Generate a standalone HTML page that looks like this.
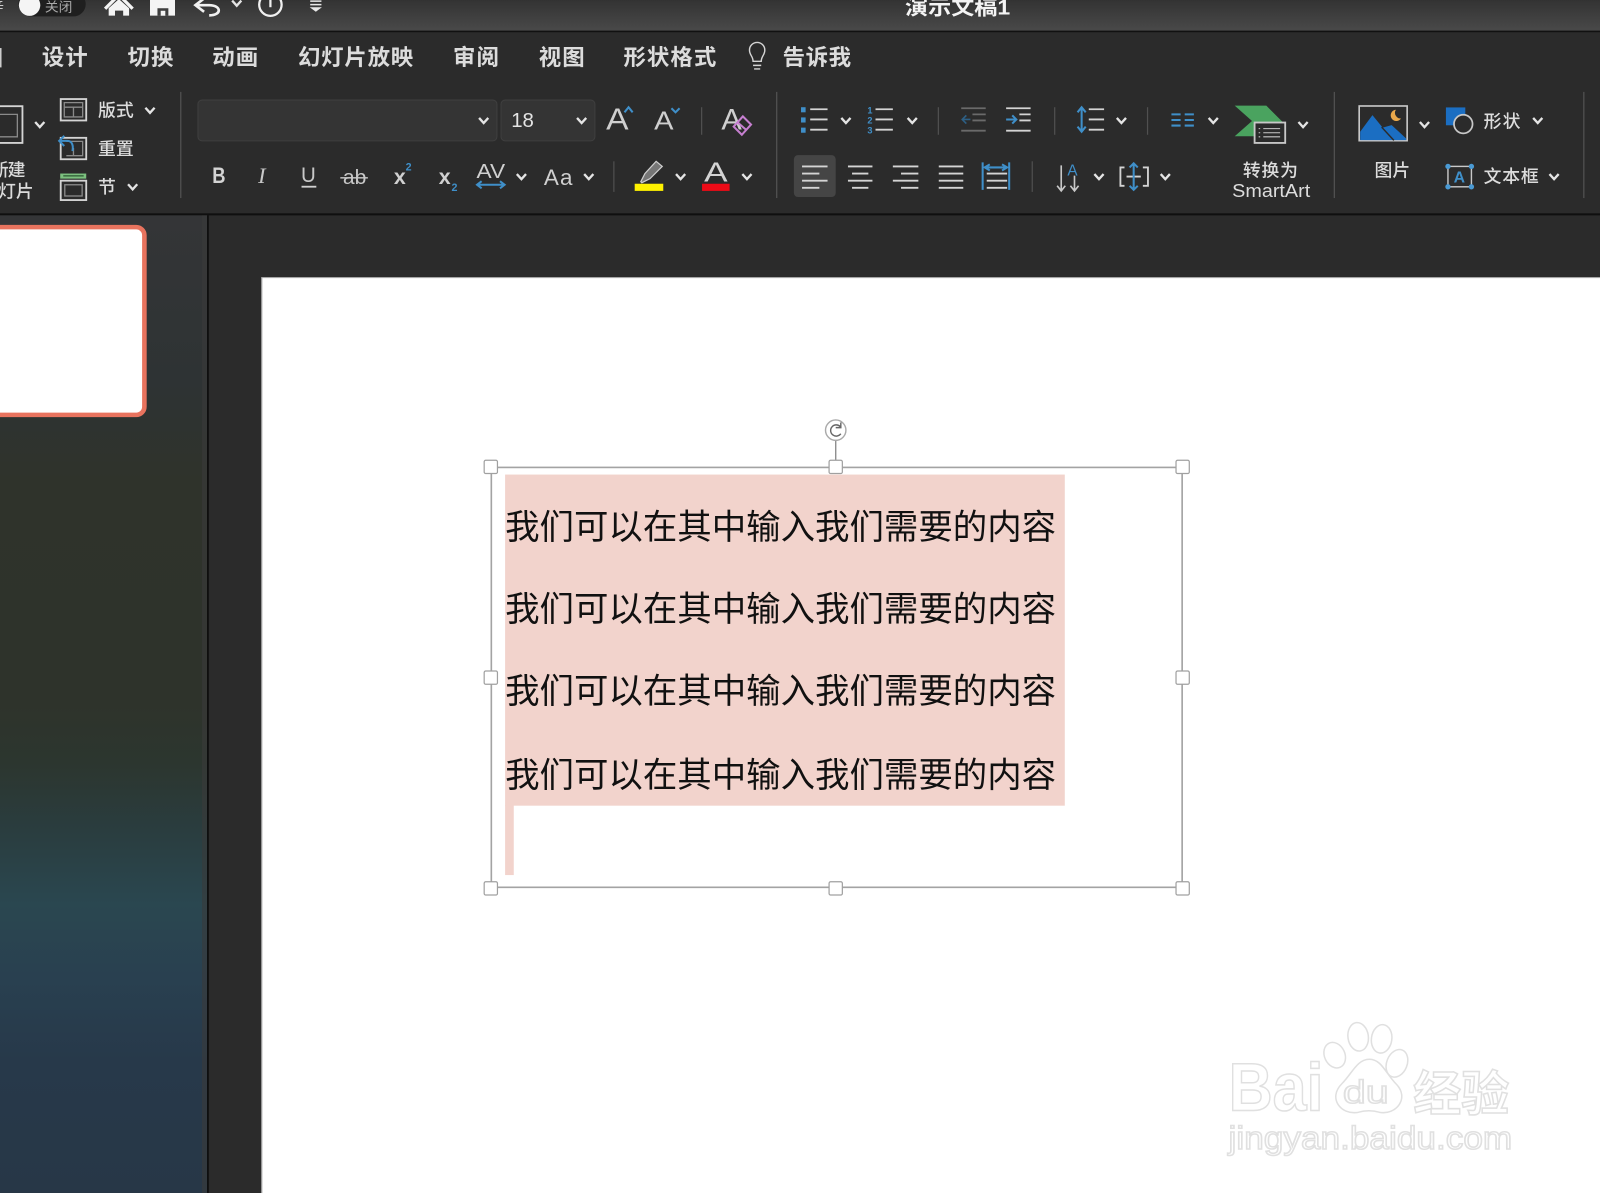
<!DOCTYPE html>
<html><head><meta charset="utf-8"><style>
html,body{margin:0;padding:0;width:1600px;height:1193px;overflow:hidden;background:#2a2a2a}
svg{display:block;position:absolute;left:0;top:0}
text{font-family:"Liberation Sans","Noto Sans CJK SC",sans-serif}
.t{fill:#dcdcdc;font-weight:700;font-size:22px}
.s{fill:#dcdcdc;font-size:17.5px;font-weight:500}
.b{fill:#111;font-size:34px}
.i{fill:none;stroke:#d4d4d4;stroke-width:1.8}
.d{fill:none;stroke:#8a8a8a;stroke-width:1.3}
.bl{fill:none;stroke:#3f8fc9;stroke-width:2}
.wm{fill:#fff;stroke:#e0e0e0;stroke-width:1.5}
</style></head><body>
<svg width="1600" height="1193" viewBox="0 0 1568 1169" xmlns="http://www.w3.org/2000/svg">
<defs>
<linearGradient id="tb" x1="0" y1="0" x2="0" y2="1"><stop offset="0" stop-color="#333"/><stop offset="1" stop-color="#494949"/></linearGradient>
<linearGradient id="sb" x1="0" y1="0" x2="0" y2="1">
<stop offset="0" stop-color="#343537"/><stop offset=".17" stop-color="#2e3334"/><stop offset=".27" stop-color="#2f332b"/><stop offset=".5" stop-color="#2e332b"/><stop offset=".56" stop-color="#2c362f"/><stop offset=".63" stop-color="#2a3d3f"/><stop offset=".705" stop-color="#2a4750"/><stop offset=".78" stop-color="#294050"/><stop offset=".865" stop-color="#27394a"/><stop offset="1" stop-color="#273747"/>
</linearGradient>
<path id="c" d="M-4.5,-2.5 L0,2.5 L4.5,-2.5" fill="none" stroke="#e4e4e4" stroke-width="2.3"/>
</defs>
<!-- base -->
<rect width="1568" height="1169" fill="#2b2b2b"/>
<rect width="1568" height="30" fill="url(#tb)"/>
<rect y="30" width="1568" height="1.5" fill="#111"/>
<rect y="209" width="1568" height="2" fill="#0f0f0f"/>
<rect y="211" width="203" height="958" fill="url(#sb)"/>
<rect x="198" y="211" width="5" height="958" fill="#3a3a3a" opacity=".6"/>
<rect x="203" y="211" width="1.5" height="958" fill="#0a0a0a"/>
<!-- title bar -->
<rect x="18" y="-8" width="66" height="24" rx="12" fill="#1f1f1f"/>
<circle cx="29" cy="5" r="10.5" fill="#f5f5f5"/>
<text x="44" y="11" font-size="13" fill="#aaa" textLength="27" lengthAdjust="spacingAndGlyphs">关闭</text>
<text x="-10" y="11" font-size="14" fill="#ccc">辛</text>
<path d="M103,8.5 L116.5,-5 L130,8.5" fill="none" stroke="#f4f4f4" stroke-width="3.2"/>
<path d="M106.5,8 L116.5,-1 L126.5,8 V15.3 H120.7 V10.4 H112.7 V15.3 H106.5 Z" fill="#f4f4f4"/>
<path d="M147,-3 H171.5 V15.3 H147 Z" fill="#f4f4f4"/><rect x="154.3" y="8" width="10.7" height="7.3" fill="#3f3f3f"/><rect x="157.5" y="10.5" width="4.5" height="4.8" fill="#f4f4f4"/>
<path d="M191,5 H205 C217,5 218,15 205,15 M200.5,-2 L191.5,5 L200,11.5" fill="none" stroke="#f0f0f0" stroke-width="2.6"/>
<use href="#c" x="232" y="3"/>
<circle cx="265" cy="4.5" r="11" fill="none" stroke="#f0f0f0" stroke-width="2.2"/><path d="M265,-3 V7" stroke="#f0f0f0" stroke-width="2.2"/>
<path d="M304,1 H315 M304,4.5 H315" stroke="#e8e8e8" stroke-width="1.5"/><path d="M303.5,7 H315.5 L309.5,11.5 Z" fill="#e8e8e8"/>
<text x="887" y="14" font-size="20.5" font-weight="700" fill="#f4f4f4" textLength="103" lengthAdjust="spacingAndGlyphs">演示文稿1</text>
<!-- tabs -->
<rect x="0" y="47" width="1.5" height="19" fill="#ccc"/>
<g class="tabs">
<text class="t" x="41" y="63.5" textLength="45">设计</text>
<text class="t" x="125" y="63.5" textLength="45">切换</text>
<text class="t" x="208" y="63.5" textLength="45">动画</text>
<text class="t" x="292" y="63.5" textLength="113">幻灯片放映</text>
<text class="t" x="444" y="63.5" textLength="45">审阅</text>
<text class="t" x="528" y="63.5" textLength="45">视图</text>
<text class="t" x="611" y="63.5" textLength="91">形状格式</text>
<text class="t" x="767" y="63.5" textLength="67">告诉我</text>
</g>
<path d="M738,60 C738,55 734.5,54 734.5,49 A7.5,7.5 0 0 1 749.5,49 C749.5,54 746,55 746,60 Z M738,64 H746 M739,67.5 H745" fill="none" stroke="#d4d4d4" stroke-width="1.4"/>
<!-- separators -->
<g fill="#505050">
<rect x="176.5" y="90" width="1.3" height="104"/><rect x="760.5" y="90" width="1.3" height="104"/><rect x="1307" y="90" width="1.3" height="104"/><rect x="1551.5" y="90" width="1.3" height="104"/>
<rect x="687" y="105" width="1.2" height="27"/><rect x="919" y="105" width="1.2" height="27"/><rect x="1033" y="105" width="1.2" height="27"/><rect x="1124" y="105" width="1.2" height="27"/>
<rect x="601" y="158" width="1.2" height="30"/><rect x="1011" y="158" width="1.2" height="30"/>
</g>
<!-- slides group -->
<rect x="-6" y="104" width="28" height="36" class="i"/><path d="M-6,112 H17 V134 H-6" class="d"/>
<text class="s" x="-9" y="172.5" textLength="34">新建</text>
<text class="s" x="-2" y="193.5" textLength="35">灯片</text>
<rect x="59.5" y="97" width="25" height="21" class="i"/><path d="M63,100.5 H81 V114.5 H63 Z M63,105 H81 M72,105 V114.5" class="d"/>
<text class="s" x="96" y="114" textLength="35">版式</text>
<rect x="59.5" y="135" width="25" height="21" class="i"/><path d="M65,138.5 H81 V152.5 H65 M72,145 V152" class="d"/>
<path d="M59,138 H66 C71,138 72,143 71,148" class="bl" stroke-width="2"/><path d="M63,133 L58,138 L63,143" class="bl" stroke-width="2"/>
<text class="s" x="96" y="152" textLength="35">重置</text>
<rect x="59" y="170" width="25.5" height="5" fill="#7cc07f"/><rect x="62" y="171.5" width="20" height="1.5" fill="#3a6a3f"/>
<rect x="59.5" y="177" width="25" height="19" class="i"/><rect x="63.5" y="181" width="17" height="11" class="d"/>
<text class="s" x="96" y="189" textLength="17">节</text>
<!-- font boxes -->
<rect x="194" y="98" width="293" height="40" rx="4" fill="#343434" stroke="#3f3f3f"/>
<rect x="491" y="98" width="92" height="40" rx="4" fill="#343434" stroke="#3f3f3f"/>
<text x="501" y="124.5" font-size="20" fill="#e4e4e4" font-weight="500">18</text>
<text x="594" y="127" font-size="30" fill="#cfcfcf" textLength="22" lengthAdjust="spacingAndGlyphs">A</text>
<path d="M612,110 L616,105 L620,110" class="bl" stroke-width="1.4"/>
<text x="641" y="127" font-size="25" fill="#cfcfcf" textLength="19" lengthAdjust="spacingAndGlyphs">A</text>
<path d="M658,106 L662,110 L666,106" class="bl" stroke-width="1.4"/>
<text x="707" y="127" font-size="29" fill="#cfcfcf" textLength="20" lengthAdjust="spacingAndGlyphs">A</text>
<path d="M719,124 L728,114 L736,122 L727,132 Z M723,120 L731,127" fill="none" stroke="#c67fd0" stroke-width="2"/>
<!-- format row -->
<text x="208" y="179.5" font-size="22" font-weight="700" fill="#d4d4d4" textLength="13" lengthAdjust="spacingAndGlyphs">B</text>
<text x="253" y="179.5" font-size="22" font-style="italic" fill="#c8c8c8" style="font-family:'Liberation Serif',serif">I</text>
<text x="295" y="178.5" font-size="21" fill="#c8c8c8" textLength="14.5" lengthAdjust="spacingAndGlyphs">U</text><rect x="295.5" y="182" width="14.5" height="1.8" fill="#d0d0d0"/>
<text x="336" y="180.5" font-size="20" fill="#c8c8c8" textLength="23" lengthAdjust="spacingAndGlyphs">ab</text><rect x="333.5" y="173.5" width="27" height="1.4" fill="#c8c8c8"/>
<text x="386" y="180.5" font-size="21" font-weight="700" fill="#d0d0d0">x</text><text x="397.5" y="167" font-size="10.5" font-weight="700" fill="#3f8fc9">2</text>
<text x="430" y="180.5" font-size="21" font-weight="700" fill="#d0d0d0">x</text><text x="442.5" y="187" font-size="10.5" font-weight="700" fill="#3f8fc9">2</text>
<text x="467" y="174.5" font-size="20" fill="#d0d0d0" textLength="28" lengthAdjust="spacingAndGlyphs">AV</text>
<path d="M468,181 H494 M472,177.5 L467.5,181 L472,184.5 M490,177.5 L494.5,181 L490,184.5" class="bl" stroke-width="1.6"/>
<text x="533" y="181" font-size="22" fill="#cfcfcf" textLength="28">Aa</text>
<path d="M628,178 L632,170 L643,158 L649,163 L637,175 L629,179 Z" fill="#777" stroke="#cfcfcf" stroke-width="1.2"/>
<rect x="622" y="180" width="28" height="7" fill="#fff200"/>
<text x="690" y="178" font-size="27" fill="#d4d4d4" textLength="23" lengthAdjust="spacingAndGlyphs">A</text>
<rect x="688" y="180" width="27" height="7" fill="#ee0b17"/>
<!-- lists -->
<g fill="#3f8fc9"><rect x="785" y="105" width="4.5" height="5"/><rect x="785" y="115" width="4.5" height="5"/><rect x="785" y="125" width="4.5" height="5"/></g>
<path d="M794,107 H811 M794,117 H811 M794,127 H811" class="i"/>
<text x="850" y="111" font-size="9" fill="#3f8fc9" font-weight="700">1</text><text x="850" y="121" font-size="9" fill="#3f8fc9" font-weight="700">2</text><text x="850" y="131" font-size="9" fill="#3f8fc9" font-weight="700">3</text>
<path d="M858,107 H875 M858,117 H875 M858,127 H875" class="i"/>
<path d="M942,106 H966 M953,112 H966 M953,118 H966 M942,128 H966" fill="none" stroke="#6a6a6a" stroke-width="1.8"/><path d="M943,117 H951 M947,113 L943,117 L947,121" fill="none" stroke="#2d5f84" stroke-width="1.6"/>
<path d="M986,106 H1010 M999,112 H1010 M999,118 H1010 M986,128 H1010" class="i"/><path d="M986,117 H996 M992,113 L996,117 L992,121" class="bl" stroke-width="1.6"/>
<path d="M1067,107 H1082 M1067,117 H1082 M1067,127 H1082" class="i"/>
<path d="M1060,106 V128 M1056,110 L1060,105 L1064,110 M1056,124 L1060,129 L1064,124" class="bl" stroke-width="1.8"/>
<path d="M1148,112 H1157 M1148,117.5 H1157 M1148,123 H1157 M1161,112 H1170 M1161,117.5 H1170 M1161,123 H1170" class="bl" stroke-width="1.8"/>
<!-- align -->
<rect x="778" y="152" width="41" height="41" rx="4" fill="#454545"/>
<path d="M786,163 H811 M786,170 H803 M786,177 H811 M786,184 H803" class="i"/>
<path d="M831,163 H855 M835,170 H851 M831,177 H855 M835,184 H851" class="i"/>
<path d="M875,163 H900 M883,170 H900 M875,177 H900 M883,184 H900" class="i"/>
<path d="M920,163 H944 M920,170 H944 M920,177 H944 M920,184 H944" class="i"/>
<path d="M967,170 H987 M967,177 H987 M967,184 H987" class="i"/>
<path d="M963,159 V186 M989,159 V186 M966,164 H986 M970,161 L965,164 L970,167 M982,161 L987,164 L982,167" class="bl" stroke-width="1.6"/>
<!-- text dir -->
<path d="M1040,162 V187 M1036,182 L1040,187 L1044,182 M1053,172 V187 M1049,182 L1053,187 L1057,182" fill="none" stroke="#c8c8c8" stroke-width="1.6"/>
<text x="1046" y="172" font-size="15" fill="#3f8fc9">A</text>
<path d="M1102,164 H1098 V182 H1102 M1120,164 H1125 V182 H1120 M1104,173 H1118" class="i" stroke-width="1.4"/>
<path d="M1111,160 V186 M1107,164 L1111,160 L1115,164 M1107,182 L1111,186 L1115,182" class="bl" stroke-width="1.6"/>
<!-- smartart -->
<path d="M1210,103.5 H1241 L1257,119.5 H1230 V133.5 H1210 L1227,118.5 Z" fill="#4aa35f"/>
<rect x="1229.5" y="120" width="30" height="20" fill="#2b2b2b" stroke="#c8c8c8" stroke-width="1.8"/>
<path d="M1238,126 H1254.5 M1238,130 H1254.5 M1238,134 H1254.5 M1233.5,126 H1235 M1233.5,130 H1235 M1233.5,134 H1235" stroke="#c8c8c8" stroke-width="1"/>
<text class="s" x="1218" y="173" textLength="54">转换为</text>
<text x="1207.5" y="193" textLength="76.5" lengthAdjust="spacingAndGlyphs" font-size="18.5" fill="#dcdcdc">SmartArt</text>
<!-- picture -->
<rect x="1332" y="103.8" width="47" height="34" fill="#2b2b2b" stroke="#c8c8c8" stroke-width="1.6"/>
<path d="M1333,129 L1345,112.7 L1355,125 L1363.8,122.5 L1378,135.6 V137.2 H1333 Z" fill="#1b6ec2"/>
<path d="M1354,124.5 L1366,137.5" stroke="#2b2b2b" stroke-width="1.4"/>
<path d="M1368,107.5 A5.5,5.5 0 1 0 1373,116 A5.5,5.5 0 0 1 1368,107.5 Z" fill="#eba94b"/>
<text class="s" x="1347" y="173" textLength="35">图片</text>
<!-- shape -->
<rect x="1417" y="105.2" width="19" height="17.5" fill="#1b6ec2"/>
<circle cx="1434" cy="121.5" r="9.1" fill="#2b2b2b" stroke="#c8c8c8" stroke-width="1.7"/>
<text class="s" x="1454" y="125" textLength="36">形状</text>
<rect x="1419" y="163" width="23" height="20" fill="none" stroke="#c8c8c8" stroke-width="1.4"/>
<g fill="#4a9ad4"><circle cx="1419" cy="163" r="2.6"/><circle cx="1442" cy="163" r="2.6"/><circle cx="1419" cy="183" r="2.6"/><circle cx="1442" cy="183" r="2.6"/></g>
<text x="1424.5" y="179" font-size="15.5" font-weight="700" fill="#3f8fc9">A</text>
<text class="s" x="1454" y="179" textLength="54">文本框</text>
<!-- chevrons -->
<use href="#c" x="39" y="122"/><use href="#c" x="147" y="108"/><use href="#c" x="130" y="183"/>
<use href="#c" x="474" y="118"/><use href="#c" x="570" y="118"/><use href="#c" x="511" y="173"/><use href="#c" x="577" y="173"/><use href="#c" x="667" y="173"/><use href="#c" x="732" y="173"/>
<use href="#c" x="829" y="118"/><use href="#c" x="894" y="118"/><use href="#c" x="1099" y="118"/><use href="#c" x="1189" y="118"/><use href="#c" x="1277" y="122"/><use href="#c" x="1396" y="122"/><use href="#c" x="1507" y="118"/><use href="#c" x="1523" y="173"/><use href="#c" x="1077" y="173"/><use href="#c" x="1142" y="173"/>
<!-- thumbnail -->
<rect x="-20" y="222.5" width="161.5" height="184" rx="8" fill="#fff" stroke="#e8735e" stroke-width="4.5"/>
<!-- slide -->
<rect x="256.5" y="272" width="1320" height="900" fill="#fff"/>
<rect x="256" y="272" width="1.2" height="900" fill="#b5b5b5"/>
<rect x="256" y="271.5" width="1320" height="1" fill="#b5b5b5"/>
<!-- text highlight -->
<rect x="495" y="465" width="548.5" height="324.5" fill="#f2d3cc"/>
<rect x="495" y="789" width="8.5" height="68.5" fill="#f2d3cc"/>
<text class="b" x="495" y="528" textLength="540" lengthAdjust="spacingAndGlyphs">我们可以在其中输入我们需要的内容</text>
<text class="b" x="495" y="608.5" textLength="540" lengthAdjust="spacingAndGlyphs">我们可以在其中输入我们需要的内容</text>
<text class="b" x="495" y="689" textLength="540" lengthAdjust="spacingAndGlyphs">我们可以在其中输入我们需要的内容</text>
<text class="b" x="495" y="771" textLength="540" lengthAdjust="spacingAndGlyphs">我们可以在其中输入我们需要的内容</text>
<!-- selection frame -->
<rect x="481.5" y="458" width="677" height="411.5" fill="none" stroke="#a3a3a3" stroke-width="1.6"/>
<path d="M819,431 V452" stroke="#909090" stroke-width="1.4"/>
<circle cx="819" cy="421.5" r="10" fill="#fff" stroke="#aaa" stroke-width="1.4"/>
<path d="M823.5,418 A5.5,5.5 0 1 0 824,425 M824,414 V419 H819" fill="none" stroke="#666" stroke-width="1.4"/>
<g fill="#fff" stroke="#a0a0a0" stroke-width="1.2">
<rect x="474.5" y="451" width="13" height="13" rx="1.5"/><rect x="812.5" y="451" width="13" height="13" rx="1.5"/><rect x="1152.5" y="451" width="13" height="13" rx="1.5"/>
<rect x="474.5" y="657.5" width="13" height="13" rx="1.5"/><rect x="1152.5" y="657.5" width="13" height="13" rx="1.5"/>
<rect x="474.5" y="864" width="13" height="13" rx="1.5"/><rect x="812.5" y="864" width="13" height="13" rx="1.5"/><rect x="1152.5" y="864" width="13" height="13" rx="1.5"/>
</g>
<!-- watermark -->
<text class="wm" x="1204" y="1088" font-size="66" font-weight="700" textLength="93" lengthAdjust="spacingAndGlyphs">Bai</text>
<g fill="#fff" stroke="#e0e0e0" stroke-width="1.5">
<ellipse cx="1308" cy="1034" rx="10" ry="13" transform="rotate(-25 1308 1034)"/>
<ellipse cx="1331" cy="1016" rx="10" ry="14" transform="rotate(-8 1331 1016)"/>
<ellipse cx="1354" cy="1018" rx="10" ry="14" transform="rotate(8 1354 1018)"/>
<ellipse cx="1369" cy="1042" rx="10" ry="14" transform="rotate(22 1369 1042)"/>
<path d="M1315,1062 C1325,1052 1330,1038 1342,1038 C1354,1038 1358,1052 1368,1062 C1382,1076 1368,1093 1352,1090 C1345,1088 1338,1088 1331,1090 C1314,1093 1301,1076 1315,1062 Z"/>
</g>
<text class="wm" x="1316" y="1081" font-size="32" textLength="45" lengthAdjust="spacingAndGlyphs">du</text>
<text class="wm" x="1385" y="1088" font-size="47" font-weight="700" textLength="94" lengthAdjust="spacingAndGlyphs">经验</text>
<text class="wm" x="1204" y="1126" font-size="32" textLength="278" lengthAdjust="spacingAndGlyphs">jingyan.baidu.com</text>
</svg>
</body></html>
